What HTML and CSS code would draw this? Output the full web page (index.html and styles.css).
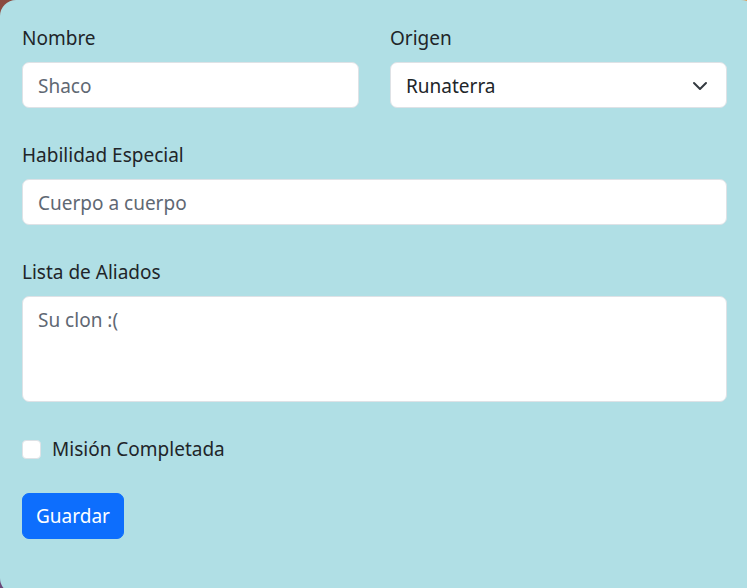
FILE: index.html
```html
<!DOCTYPE html>
<html lang="es">
<head>
<meta charset="utf-8">
<title>Formulario</title>
<link rel="stylesheet" href="styles.css">
</head>
<body>
<div class="card">
  <form class="form">
    <div class="row">
      <div class="field">
        <label class="label" for="nombre">Nombre</label>
        <input class="control" id="nombre" type="text" placeholder="Shaco">
      </div>
      <div class="field">
        <label class="label" for="origen">Origen</label>
        <div class="select">
          <span class="select-value">Runaterra</span>
          <svg class="chevron" viewBox="0 0 16 16" width="16" height="16"><path d="M2 5l6 6 6-6" fill="none" stroke="#343a40" stroke-width="2" stroke-linecap="round" stroke-linejoin="round"/></svg>
        </div>
      </div>
    </div>
    <div class="field">
      <label class="label" for="habilidad">Habilidad Especial</label>
      <input class="control" id="habilidad" type="text" placeholder="Cuerpo a cuerpo">
    </div>
    <div class="field">
      <label class="label" for="aliados">Lista de Aliados</label>
      <textarea class="control area" id="aliados" placeholder="Su clon :("></textarea>
    </div>
    <div class="check">
      <span class="box"></span>
      <span class="check-label">Misión Completada</span>
    </div>
    <button class="btn" type="button">Guardar</button>
  </form>
</div>
</body>
</html>
```
FILE: styles.css
```css
html, body {
  margin: 0;
  padding: 0;
  overflow: hidden;
}
body {
  width: 747px;
  height: 588px;
  background: linear-gradient(135deg, #8a4a40 0%, #b06040 30%, #e8a050 60%, #f0a850 100%);
  position: relative;
  font-family: "Noto Sans", "Open Sans", sans-serif;
  color: #212529;
}
body::before {
  content: "";
  position: absolute;
  left: 0;
  bottom: 0;
  width: 40px;
  height: 40px;
  background: #6a4878;
}
.card {
  position: relative;
  width: 757px;
  height: 594px;
  box-sizing: border-box;
  background: #b0dfe5;
  border-radius: 16px;
  padding: 24px 30px 0 22px;
}
.form {
  display: flex;
  flex-direction: column;
}
.row {
  display: grid;
  grid-template-columns: 1fr 1fr;
  column-gap: 31px;
}
.field {
  display: flex;
  flex-direction: column;
  margin-bottom: 33px;
}
.label {
  font-size: 19px;
  line-height: 29px;
  margin-bottom: 9px;
}
.control {
  box-sizing: border-box;
  height: 46px;
  border: 1px solid #dee2e6;
  border-radius: 7px;
  background: #fff;
  padding: 2px 15px 0;
  font-family: inherit;
  font-size: 19px;
  color: #212529;
  outline: none;
  width: 100%;
}
.control::placeholder {
  color: #5f6873;
  opacity: 1;
}
.area {
  height: 106px;
  padding: 9px 15px;
  line-height: 29px;
  resize: none;
}
.select {
  box-sizing: border-box;
  height: 46px;
  border: 1px solid #dee2e6;
  border-radius: 7px;
  background: #fff;
  padding: 2px 18px 0 15px;
  display: flex;
  align-items: center;
  justify-content: space-between;
  font-size: 19px;
}
.chevron {
  display: block;
}
.check {
  display: flex;
  align-items: center;
  gap: 11px;
  height: 29px;
  margin-bottom: 29px;
}
.box {
  width: 19px;
  height: 19px;
  box-sizing: border-box;
  border: 1px solid #dee2e6;
  border-radius: 4px;
  background: #fff;
}
.check-label {
  font-size: 19px;
  line-height: 29px;
}
.btn {
  align-self: flex-start;
  height: 46px;
  padding: 0 13px;
  border: 1px solid #0d6efd;
  border-radius: 7px;
  background: #0d6efd;
  color: #fff;
  font-family: inherit;
  font-size: 19px;
}
```
